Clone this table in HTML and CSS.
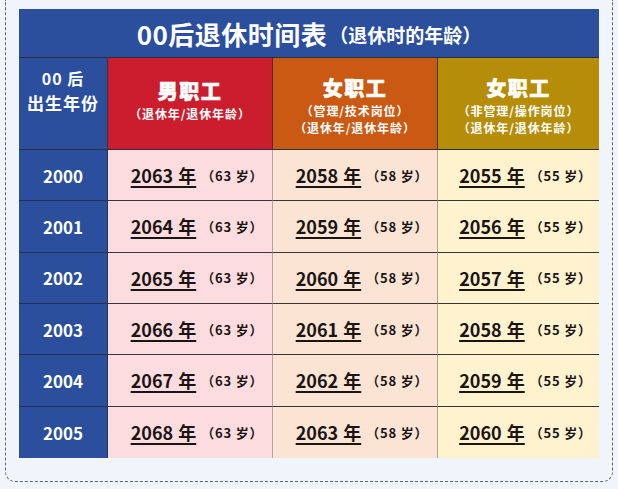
FILE: index.html
```html
<!DOCTYPE html>
<html lang="zh-CN">
<head>
<meta charset="utf-8">
<title>00后退休时间表</title>
<link rel="stylesheet" href="styles.css">
</head>
<body>
<div class="frame">
  <div class="table">
    <div class="title"><span class="title-main">00后退休时间表</span><span class="title-sub">（退休时的年龄）</span></div>
    <div class="grid">
      <div class="hcell h-year"><span class="hy1">00 后</span><span class="hy2">出生年份</span></div>
      <div class="hcell h-male"><span class="hname">男职工</span><span class="hsub">（退休年/退休年龄）</span></div>
      <div class="hcell h-fem1"><span class="hname">女职工</span><span class="hsub">（管理/技术岗位）</span><span class="hsub">（退休年/退休年龄）</span></div>
      <div class="hcell h-fem2"><span class="hname">女职工</span><span class="hsub">（非管理/操作岗位）</span><span class="hsub">（退休年/退休年龄）</span></div>

      <div class="cell year">2000</div>
      <div class="cell c-male"><span class="yr">2063 年</span><span class="age">（63 岁）</span></div>
      <div class="cell c-fem1"><span class="yr">2058 年</span><span class="age">（58 岁）</span></div>
      <div class="cell c-fem2"><span class="yr">2055 年</span><span class="age">（55 岁）</span></div>

      <div class="cell year">2001</div>
      <div class="cell c-male"><span class="yr">2064 年</span><span class="age">（63 岁）</span></div>
      <div class="cell c-fem1"><span class="yr">2059 年</span><span class="age">（58 岁）</span></div>
      <div class="cell c-fem2"><span class="yr">2056 年</span><span class="age">（55 岁）</span></div>

      <div class="cell year">2002</div>
      <div class="cell c-male"><span class="yr">2065 年</span><span class="age">（63 岁）</span></div>
      <div class="cell c-fem1"><span class="yr">2060 年</span><span class="age">（58 岁）</span></div>
      <div class="cell c-fem2"><span class="yr">2057 年</span><span class="age">（55 岁）</span></div>

      <div class="cell year">2003</div>
      <div class="cell c-male"><span class="yr">2066 年</span><span class="age">（63 岁）</span></div>
      <div class="cell c-fem1"><span class="yr">2061 年</span><span class="age">（58 岁）</span></div>
      <div class="cell c-fem2"><span class="yr">2058 年</span><span class="age">（55 岁）</span></div>

      <div class="cell year">2004</div>
      <div class="cell c-male"><span class="yr">2067 年</span><span class="age">（63 岁）</span></div>
      <div class="cell c-fem1"><span class="yr">2062 年</span><span class="age">（58 岁）</span></div>
      <div class="cell c-fem2"><span class="yr">2059 年</span><span class="age">（55 岁）</span></div>

      <div class="cell year last">2005</div>
      <div class="cell c-male last"><span class="yr">2068 年</span><span class="age">（63 岁）</span></div>
      <div class="cell c-fem1 last"><span class="yr">2063 年</span><span class="age">（58 岁）</span></div>
      <div class="cell c-fem2 last"><span class="yr">2060 年</span><span class="age">（55 岁）</span></div>
    </div>
  </div>
</div>
</body>
</html>
```

FILE: styles.css
```css
html, body {
  margin: 0;
  padding: 0;
  background: #f0f4fb;
}
body {
  font-family: "Noto Sans CJK SC", "Noto Sans", sans-serif;
  width: 618px;
  height: 489px;
  overflow: hidden;
}
.frame {
  margin: 0 5px;
  border: 1px dashed #56647e;
  border-top: none;
  border-radius: 0 0 10px 10px;
  padding: 9px 13px 23px 13px;
}
.table {
  width: 580px;
}
.title {
  height: 48px;
  background: #2b4f9d;
  border-bottom: 1px solid #2a2f3a;
  display: flex;
  align-items: center;
  justify-content: center;
  color: #ffffff;
  font-weight: 700;
  padding-right: 0;
}
.title-main {
  font-size: 26px;
  letter-spacing: 0.5px;
}
.title-sub {
  font-size: 19px;
  margin-left: 2px;
  margin-top: 3px;
}
.grid {
  display: grid;
  grid-template-columns: 89px 165px 165px 161px;
  grid-template-rows: 92px repeat(6, 51.33px);
}
.hcell {
  display: flex;
  flex-direction: column;
  align-items: center;
  justify-content: center;
  color: #ffffff;
  font-weight: 700;
  border-bottom: 1px solid #2a2f3a;
  box-sizing: border-box;
}
.h-year { background: #2b4f9d; border-right: 1px solid #2a3550; padding-bottom: 26px; }
.h-male { background: #cc1d2e; border-right: 1px solid #5a2a20; padding-bottom: 8px; }
.h-fem1 { background: #c95913; border-right: 1px solid #4a3018; padding-top: 4px; }
.h-fem2 { background: #b58d09; padding-top: 4px; }
.hy1 { font-size: 16px; line-height: 24px; letter-spacing: 1px; }
.hy2 { font-size: 17px; line-height: 26px; letter-spacing: 1px; }
.hname {
  font-size: 20px;
  font-weight: 900;
  line-height: 26px;
  letter-spacing: 1.5px;
  margin-bottom: 1px;
  -webkit-text-stroke: 0.6px #ffffff;
}
.hsub {
  font-size: 12px;
  line-height: 17px;
  letter-spacing: 0.9px;
  font-weight: 700;
}
.cell {
  display: flex;
  align-items: center;
  justify-content: center;
  border-bottom: 1px solid #3a3434;
  box-sizing: border-box;
  color: #1a1414;
  font-weight: 700;
}
.cell.last { border-bottom: none; }
.year {
  background: #2b4f9d;
  color: #ffffff;
  font-size: 17px;
  font-weight: 700;
  border-right: 1px solid #2a3550;
  border-bottom-color: #22305a;
}
.c-male, .c-fem1, .c-fem2 { padding-left: 14px; }
.c-male { background: #fcdcdf; border-right: 1px solid #b8a2a0; }
.c-fem1 { background: #fbe4d4; border-right: 1px solid #b8a48e; }
.c-fem2 { background: #fef2cf; }
.yr {
  font-size: 18px;
  font-weight: 700;
  text-decoration: underline;
  text-decoration-thickness: 1.5px;
  text-underline-offset: 3px;
  word-spacing: 1px;
}
.age {
  font-size: 13px;
  font-weight: 700;
  margin-left: 5px;
  letter-spacing: 0.8px;
}
```
